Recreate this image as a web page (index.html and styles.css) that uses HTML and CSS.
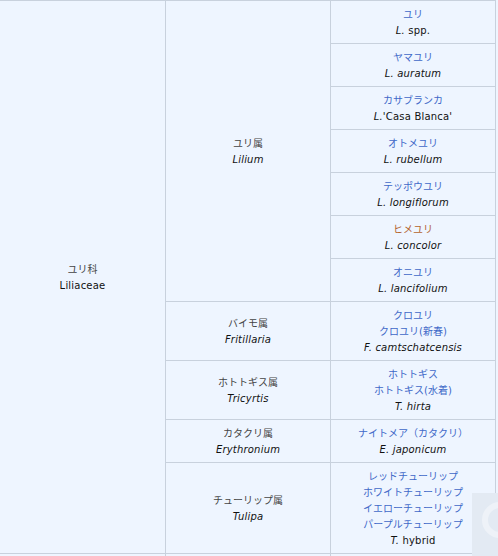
FILE: index.html
```html
<!DOCTYPE html>
<html lang="ja">
<head>
<meta charset="utf-8">
<title>ユリ科</title>
<link rel="stylesheet" href="styles.css">
</head>
<body>
<div class="grid">
  <div class="cell fam"><span class="ja">ユリ科</span><span class="la">Liliaceae</span></div>
  <div class="cell gen lilium"><span class="ja">ユリ属</span><span class="la"><i>Lilium</i></span></div>
  <div class="cell"><a class="link">ユリ</a><span class="la"><i>L.</i> spp.</span></div>
  <div class="cell"><a class="link">ヤマユリ</a><span class="la"><i>L. auratum</i></span></div>
  <div class="cell"><a class="link">カサブランカ</a><span class="la"><i>L.</i>'Casa Blanca'</span></div>
  <div class="cell"><a class="link">オトメユリ</a><span class="la"><i>L. rubellum</i></span></div>
  <div class="cell"><a class="link">テッポウユリ</a><span class="la"><i>L. longiflorum</i></span></div>
  <div class="cell"><a class="link new">ヒメユリ</a><span class="la"><i>L. concolor</i></span></div>
  <div class="cell"><a class="link">オニユリ</a><span class="la"><i>L. lancifolium</i></span></div>

  <div class="cell gen"><span class="ja">バイモ属</span><span class="la"><i>Fritillaria</i></span></div>
  <div class="cell"><a class="link">クロユリ</a><a class="link">クロユリ(新春)</a><span class="la"><i>F. camtschatcensis</i></span></div>

  <div class="cell gen"><span class="ja">ホトトギス属</span><span class="la"><i>Tricyrtis</i></span></div>
  <div class="cell"><a class="link">ホトトギス</a><a class="link">ホトトギス(水着)</a><span class="la"><i>T. hirta</i></span></div>

  <div class="cell gen"><span class="ja">カタクリ属</span><span class="la"><i>Erythronium</i></span></div>
  <div class="cell"><a class="link">ナイトメア（カタクリ）</a><span class="la"><i>E. japonicum</i></span></div>

  <div class="cell gen"><span class="ja">チューリップ属</span><span class="la"><i>Tulipa</i></span></div>
  <div class="cell"><a class="link">レッドチューリップ</a><a class="link">ホワイトチューリップ</a><a class="link">イエローチューリップ</a><a class="link">パープルチューリップ</a><span class="la"><i>T.</i> hybrid</span></div>

  <div class="cell next"></div>
  <div class="cell next"></div>
  <div class="cell next"></div>
</div>
<div class="totop">
  <svg width="40" height="70" viewBox="0 0 40 70"><circle cx="28" cy="27" r="15" fill="none" stroke="#eef2f8" stroke-width="6"/></svg>
</div>
</body>
</html>
```

FILE: styles.css
```css
html, body {
  margin: 0;
  padding: 0;
  background: #eef5ff;
  overflow: hidden;
}

body {
  font-family: "DejaVu Sans", "Noto Sans CJK JP", sans-serif;
  font-size: 10px;
  line-height: 16px;
  color: #222;
}

.grid {
  display: grid;
  grid-template-columns: 165px 164px 164px;
  gap: 1px;
  background: #c8d1dd;
  border: 1px solid #c8d1dd;
  margin-left: -1px;
  width: max-content;
}

.cell {
  background: #eef5ff;
  padding: 6px 4px 4px;
  display: flex;
  flex-direction: column;
  align-items: center;
  justify-content: center;
  text-align: center;
}

.fam {
  grid-column: 1;
  grid-row: 1 / 12;
}

.lilium {
  grid-row: 1 / 8;
}

.gen {
  grid-column: 2;
}

.next {
  min-height: 40px;
}

.ja {
  color: #444;
}

.la {
  color: #111;
  white-space: pre;
  letter-spacing: 0.2px;
}

.link {
  color: #4068c8;
  text-decoration: none;
}

.link.new {
  color: #b4642e;
}

.totop {
  position: fixed;
  left: 472px;
  top: 493px;
  width: 40px;
  height: 70px;
  background: #e3eaf3;
}

.totop svg {
  display: block;
}
```
